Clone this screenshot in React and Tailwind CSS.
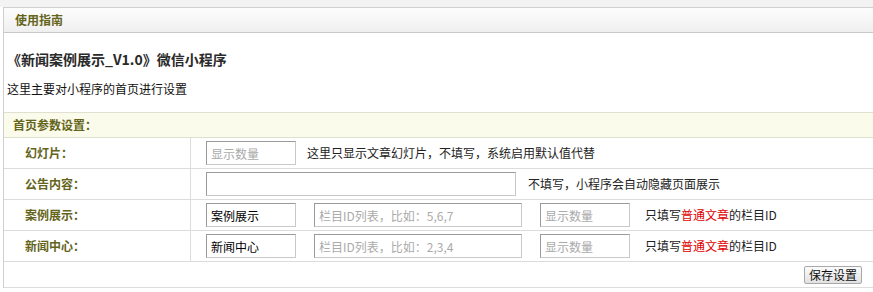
import React from "react";

const 字体 = { fontFamily: '"Noto Sans CJK SC", "Liberation Sans", sans-serif' };

// 输入框：上左边框深一点，看起来像 inset
function 输入框({ 宽, 值, 提示 }) {
  return (
    <input
      type="text"
      defaultValue={值}
      placeholder={提示}
      className={`${宽} h-[24px] px-[4px] text-[12px] text-black placeholder:text-[#aaa] border border-[#c9c9c9] border-t-[#9a9a9a] border-l-[#9a9a9a] outline-none bg-white`}
    />
  );
}

function 行({ 标签, children }) {
  return (
    <div className="flex h-[31px] border-b border-[#dcdcdc]">
      <div className="w-[187px] shrink-0 border-r border-[#dcdcdc] flex items-center pl-[21px] text-[12px] font-bold text-[#64641a]">
        {标签}
      </div>
      <div className="flex items-center pl-[15px] text-[12px] text-[#222]">{children}</div>
    </div>
  );
}

export default function App() {
  return (
    <div className="w-[873px] h-[292px] overflow-hidden bg-white" style={字体}>
      <div className="h-[7px] bg-[#f3f3f3]" />
      <div className="ml-[3px] w-[900px] border-l border-t border-[#d0d0d0]">
        {/* 使用指南 */}
        <div className="h-[25px] flex items-center pl-[11px] bg-gradient-to-b from-[#fdfdfd] to-[#efefef] border-b border-[#c8c8c8] text-[12px] font-bold text-[#64641a]">
          使用指南
        </div>

        <div className="pl-[3px] pt-[16px] pb-[13px]">
          <h2 className="h-[20px] leading-[20px] text-[14px] font-bold text-[#2a2a2a]">
            《新闻案例展示_V1.0》微信小程序
          </h2>
          <p className="mt-[10px] h-[20px] leading-[20px] text-[12px] text-[#111]">这里主要对小程序的首页进行设置</p>
        </div>

        {/* 首页参数设置 */}
        <div className="h-[26px] flex items-center pl-[9px] bg-[#fbfbeb] border-t border-b border-[#e0e0d0] text-[12px] font-bold text-[#64641a]">
          首页参数设置：
        </div>

        <行 标签="幻灯片：">
          <输入框 宽="w-[90px]" 提示="显示数量" />
          <span className="ml-[11px]">这里只显示文章幻灯片，不填写，系统启用默认值代替</span>
        </行>
        <行 标签="公告内容：">
          <输入框 宽="w-[310px]" />
          <span className="ml-[12px]">不填写，小程序会自动隐藏页面展示</span>
        </行>
        <行 标签="案例展示：">
          <输入框 宽="w-[90px]" 值="案例展示" />
          <span className="ml-[18px]"><输入框 宽="w-[208px]" 提示="栏目ID列表，比如：5,6,7" /></span>
          <span className="ml-[18px]"><输入框 宽="w-[90px]" 提示="显示数量" /></span>
          <span className="ml-[15px]">
            只填写<span className="text-[#e00000]">普通文章</span>的栏目ID
          </span>
        </行>
        <行 标签="新闻中心：">
          <输入框 宽="w-[90px]" 值="新闻中心" />
          <span className="ml-[18px]"><输入框 宽="w-[208px]" 提示="栏目ID列表，比如：2,3,4" /></span>
          <span className="ml-[18px]"><输入框 宽="w-[90px]" 提示="显示数量" /></span>
          <span className="ml-[15px]">
            只填写<span className="text-[#e00000]">普通文章</span>的栏目ID
          </span>
        </行>

        <div className="h-[26px] border-b border-[#dcdcdc] flex items-center">
          <button className="ml-[800px] h-[18px] w-[58px] text-[12px] leading-none text-[#111] bg-gradient-to-b from-[#fbfbfb] to-[#e2e2e2] border border-[#a8a8a8] rounded-[2px]">
            保存设置
          </button>
        </div>
      </div>
    </div>
  );
}
